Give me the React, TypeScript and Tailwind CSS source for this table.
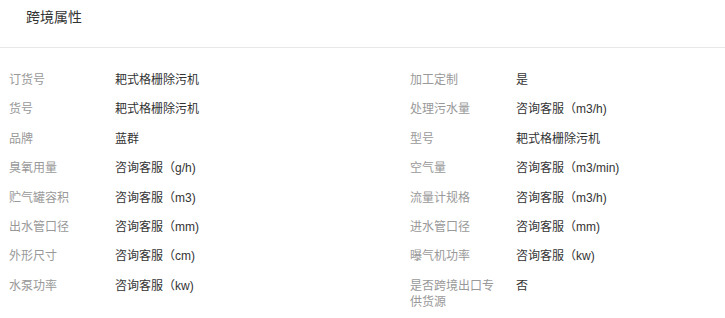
const left: [string, string][] = [
  ['订货号', '耙式格栅除污机'],
  ['货号', '耙式格栅除污机'],
  ['品牌', '蓝群'],
  ['臭氧用量', '咨询客服（g/h)'],
  ['贮气罐容积', '咨询客服（m3)'],
  ['出水管口径', '咨询客服（mm)'],
  ['外形尺寸', '咨询客服（cm)'],
  ['水泵功率', '咨询客服（kw)'],
];

const right: [string, string][] = [
  ['加工定制', '是'],
  ['处理污水量', '咨询客服（m3/h)'],
  ['型号', '耙式格栅除污机'],
  ['空气量', '咨询客服（m3/min)'],
  ['流量计规格', '咨询客服（m3/h)'],
  ['进水管口径', '咨询客服（mm)'],
  ['曝气机功率', '咨询客服（kw)'],
  ['是否跨境出口专供货源', '否'],
];

function Column({ items }: { items: [string, string][] }) {
  return (
    <div className="flex flex-col gap-[13.4px] pl-[9px]">
      {items.map(([k, v]) => (
        <div key={k} className="flex items-start text-[12px] leading-[16px]">
          <div className="w-[88px] shrink-0 text-[#999]">{k}</div>
          <div className="ml-[18px] text-[#333]">{v}</div>
        </div>
      ))}
    </div>
  );
}

export default function App() {
  return (
    <div className="h-[318px] w-[725px] bg-white font-['Liberation_Sans','Noto_Sans_CJK_SC',sans-serif]">
      <div className="h-[48px] border-b border-[#e8e8e8]">
        <h2 className="pl-[26px] pt-[8px] text-[14px] leading-[18px] font-normal text-[#333]">跨境属性</h2>
      </div>
      <div className="mt-[24px] grid grid-cols-[401px_1fr]">
        <Column items={left} />
        <Column items={right} />
      </div>
    </div>
  );
}
